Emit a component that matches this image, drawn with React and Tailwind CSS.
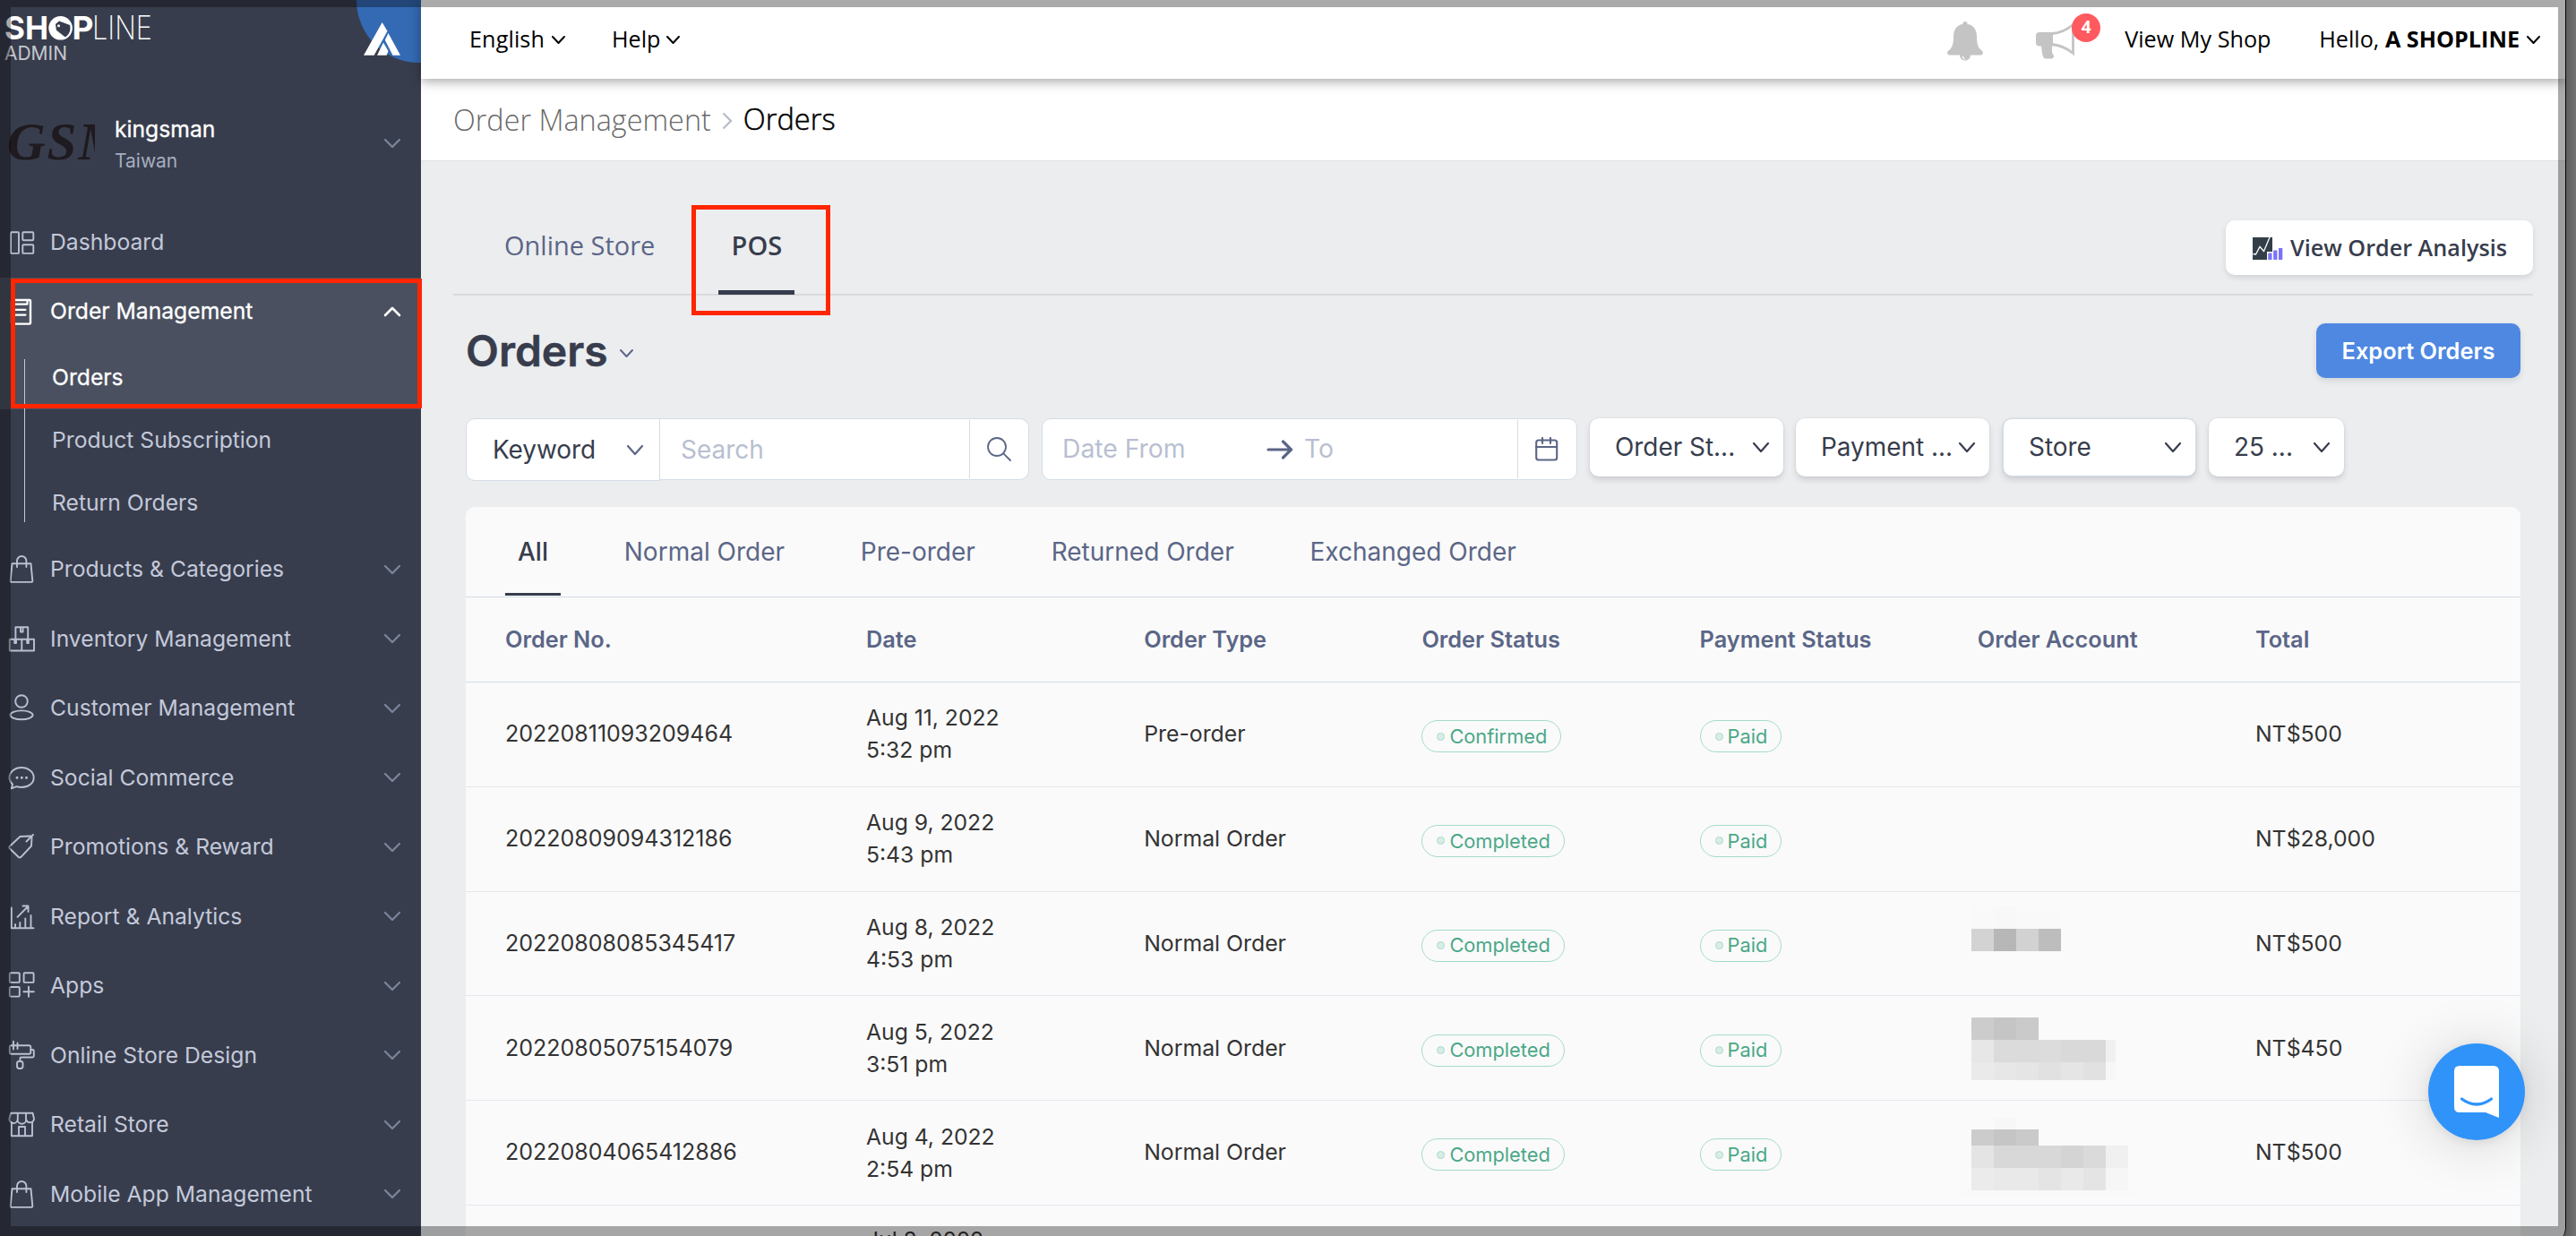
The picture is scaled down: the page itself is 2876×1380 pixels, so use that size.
import React from "react";

const Chevron = ({ w = 18, h = 10, className = "", strokeWidth = 2.2, up = false }) => (
  <svg
    width={w}
    height={h}
    viewBox={`0 0 ${w} ${h}`}
    className={`shrink-0 overflow-visible ${className}`}
    fill="none"
    stroke="currentColor"
    strokeWidth={strokeWidth}
    strokeLinecap="round"
    strokeLinejoin="round"
  >
    <path d={up ? `M1 ${h - 1}L${w / 2} 1L${w - 1} ${h - 1}` : `M1 1L${w / 2} ${h - 1}L${w - 1} 1`} />
  </svg>
);

const bag = (
  <>
    <path d="M5.500 10.300h21l1.800 19.200a1.300 1.300 0 0 1-1.300 1.400H5a1.300 1.300 0 0 1-1.300-1.400z" />
    <path d="M11 14V7.200a5.200 5.200 0 0 1 10.400 0V14" />
  </>
);

const icons = {
  dashboard: (
    <>
      <rect x="4" y="5.3" width="9" height="23.6" rx="1" />
      <rect x="17.3" y="5.3" width="12" height="9" rx="1" />
      <rect x="17.3" y="19.3" width="12" height="9.6" rx="1" />
    </>
  ),
  order: (
    <>
      <rect x="5" y="3" width="21" height="26.6" rx="1" strokeWidth="2.4" />
      <path d="M8.500 7.600H22.500V3.500M9 13.800H20.500M9 19.600H20.500" strokeWidth="2.2" />
    </>
  ),
  bag,
  inventory: (
    <>
      <path d="M9.400 16V3.200H23.200V16M2.800 16.700H30V29.500H2.800zM16.300 16.700V29.500" />
      <path d="M15 4v4.500h2.600V4M8.300 17v4h1.700v-4M22.200 17v4h1.700v-4" />
    </>
  ),
  customer: (
    <>
      <circle cx="16" cy="9" r="6.800" />
      <ellipse cx="16" cy="24.300" rx="12.600" ry="4.900" />
    </>
  ),
  chat: (
    <>
      <path d="M4.800 28.300l1.300-4.600C4 21.700 2.500 19 2.500 16.200 2.500 9.800 8.500 5 16 5s13.700 4.800 13.700 11.200S23.600 27 16 27c-2 0-4-.3-5.700-.8z" />
      <path d="M11 16.300h.01M16.300 16.300h.01M21.500 16.300h.01" strokeWidth="3" />
    </>
  ),
  tag: (
    <>
      <path d="M14.500 5L26 4.500q1.500 0 1.500 1.500L27 15.500 15.500 27.800q-1.500 1.400-3 0L3 18.500q-1.500-1.300 0-2.800z" />
      <path d="M21.500 10.500L29 3" />
    </>
  ),
  report: (
    <>
      <path d="M4.800 6.500V29.300H29.500M9 25v3M14.300 23v5M20.300 18.500v9.500M26.500 15v13" />
      <path d="M11.500 16.800L23.300 5M17.500 4.500h6v6.500" />
    </>
  ),
  apps: (
    <>
      <rect x="2.800" y="2.300" width="11" height="10.600" rx="1" />
      <rect x="18.600" y="2.300" width="11" height="10.600" rx="1" />
      <rect x="2.800" y="18" width="11" height="10.600" rx="1" />
      <path d="M24 17.800v11M18.300 23.200h11.500" />
    </>
  ),
  paint: (
    <>
      <rect x="2.800" y="5.300" width="23.500" height="9.500" rx="2" />
      <path d="M26.300 10h2q1.500 0 1.500 1.500v5.500q0 1.500-1.500 1.500H16q-1.600 0-1.600 1.500V23M7 .8V9.500M11.500 2.500V9" />
      <rect x="11" y="23" width="6.500" height="8" rx="2.400" />
    </>
  ),
  store: (
    <>
      <path d="M4 3.800H28.500L30 10a4.500 4.500 0 0 1-8.800 1 4.800 4.800 0 0 1-9.600 0A4.500 4.500 0 0 1 2.500 10zM11.800 4v7M21 4v7" />
      <path d="M4.800 14V29.300H28V14M13 29V19h7v10" />
    </>
  ),
};

const NavIcon = ({ name, light }) => (
  <svg
    width="32"
    height="32"
    viewBox="0 0 32 32"
    className={`ml-2 -mt-px shrink-0 overflow-visible ${light ? "text-white" : "text-[#b9c0d2]"}`}
    fill="none"
    stroke="currentColor"
    strokeWidth="1.900"
    strokeLinecap="round"
    strokeLinejoin="round"
  >
    {icons[name]}
  </svg>
);

const nav = [
  ["bag", "Products & Categories"],
  ["inventory", "Inventory Management"],
  ["customer", "Customer Management"],
  ["chat", "Social Commerce"],
  ["tag", "Promotions & Reward"],
  ["report", "Report & Analytics"],
  ["apps", "Apps"],
  ["paint", "Online Store Design"],
  ["store", "Retail Store"],
  ["bag", "Mobile App Management"],
];

function Sidebar() {
  return (
    <aside className="relative w-[470px] h-[1390px] shrink-0 overflow-hidden bg-[#383d4d] text-[24.700px] text-[#c3c9da]">
      <div className="relative h-[231px]">
        {/* wordmark */}
        <svg width="172" height="72" className="absolute left-0 top-0" fill="#fff" fontFamily="Inter">
          <text x="5" y="44.300" fontSize="36" fontWeight="700" textLength="49" lengthAdjust="spacingAndGlyphs">SH</text>
          <text x="80.500" y="44.300" fontSize="36" fontWeight="700" textLength="24" lengthAdjust="spacingAndGlyphs">P</text>
          <text x="103" y="44.300" fontSize="36" fontWeight="200" textLength="67" lengthAdjust="spacingAndGlyphs">LINE</text>
          <circle cx="67.600" cy="31.300" r="13.300" />
          <path d="M62 27l4-3.500 12 4.500c1.500 6-1 11-5.500 13.500L63 34.500z" fill="#383d4d" />
          <path d="M63 34l10 8M63 34l7 9M64 37l2 6" stroke="#fff" strokeWidth=".7" />
          <circle cx="65.500" cy="28.800" r="1.500" />
          <text x="5" y="67" fontSize="22" fill="#c6c8ce" textLength="70" lengthAdjust="spacingAndGlyphs">ADMIN</text>
        </svg>
        <svg width="74" height="72" className="absolute right-0 top-0">
          <circle cx="72" cy="0" r="70" fill="#336ab3" />
          <g fill="#fff">
            <path d="M30.700 25l5.800 9.800L21.700 61.700H10z" />
            <path d="M37.500 37L51 61.700h-8.500l-8.700-17z" />
            <path d="M32 47.500l5.500 9.500-1.800 4.700H25z" />
          </g>
        </svg>
        <div className="absolute left-[6px] top-[128px] h-[60px] w-[100px] overflow-hidden">
          <span className="ml-[2px] block font-['Liberation_Serif'] text-[59px] italic font-bold leading-[60px] tracking-[2px] text-[#1e1a1f]">GSM</span>
        </div>
        <div className="flex pt-[126px] pl-[128px] pr-[23px]">
          <div className="flex-1">
            <div className="text-[24.700px] leading-[36px] text-white [-webkit-text-stroke:0.3px_white]">kingsman</div>
            <div className="mt-[1px] text-[21px] leading-[34px] text-[#a5adbf]">Taiwan</div>
          </div>
          <Chevron className="mt-[29px] text-[#7c869b]" />
        </div>
      </div>

      <div className="flex h-[79px] items-center">
        <NavIcon name="dashboard" />
        <span className="ml-[16px]">Dashboard</span>
      </div>

      <div className="h-[147px] bg-[#4a505f] text-white [-webkit-text-stroke:0.3px_white]">
        <div className="flex h-[76px] items-center pr-[23px]">
          <NavIcon name="order" light />
          <span className="ml-[16px] flex-1">Order Management</span>
          <Chevron up strokeWidth={2.6} />
        </div>
        <div className="flex h-[71px] items-center pl-[58px]">Orders</div>
      </div>
      <div className="flex h-[70px] items-center pl-[58px]">Product Subscription</div>
      <div className="flex h-[70px] items-center pl-[58px]">Return Orders</div>
      <div className="absolute left-[27px] top-[401px] h-[182px] w-px bg-[#c3c9da]" />

      {nav.map(([icon, label]) => (
        <div key={label} className="flex h-[77.500px] items-center pr-[23px]">
          <NavIcon name={icon} />
          <span className="ml-[16px] flex-1">{label}</span>
          <Chevron className="text-[#7c869b]" />
        </div>
      ))}
    </aside>
  );
}

function TopBar() {
  return (
    <header className="relative z-10 flex h-[88px] shrink-0 items-center bg-white pb-[1px] pl-[54px] font-['Open_Sans'] text-[25.200px] text-black shadow-[0_3px_12px_rgba(0,0,0,0.35)]">
      <div className="flex w-[159px] items-center gap-[8px] pt-0.5"><span className="-mt-[2px] tracking-[0.1px]">English</span><Chevron w={15} h={9} strokeWidth={2} /></div>
      <div className="flex items-center gap-[7px] pt-0.5"><span className="-mt-[2px]">Help</span><Chevron w={15} h={9} strokeWidth={2} /></div>
      <div className="flex-1" />
      <svg width="40" height="44" viewBox="0 0 40 44" className="mt-[4px]" fill="#c4c4c4">
        <path d="M20 0c1.700 0 2.600 1.200 2.600 3C30 4 33 10 33 17c0 9 2 13 6 16 2 2 .5 4.500-1.500 4.500H26c0 3.500-2.500 6-6 6s-6-2.500-6-6H2.500C.5 37.500-1 35 1 33c4-3 6-7 6-16C7 10 10 4 17.400 3c0-1.800.9-3 2.600-3z" />
        <path d="M17 38.500q.5 3 3 3.500" stroke="#fff" strokeWidth="1.200" fill="none" />
      </svg>
      <div className="relative ml-[59px] w-[99px]">
        <svg width="46" height="40" viewBox="0 0 46 40" className="mt-[4px] block">
          <path d="M0 14q0-4 4-4h15v15.500H18v7q1 2 2 4 0 3-3 3h-6q-3 0-4-6l-1-8H4q-4 0-4-4z" fill="#c4c4c4" />
          <path d="M18 11.500C27 11 35 7 41.500 1.500v32C35 28 27 24.500 18 23.500" fill="none" stroke="#c4c4c4" strokeWidth="2.800" />
        </svg>
        <span className="absolute left-[40px] -top-[7px] flex size-8 items-center justify-center rounded-full bg-[#ff5a5f] text-[19px] font-bold text-white">4</span>
      </div>
      <span className="w-[217px]">View My Shop</span>
      <span className="whitespace-pre">Hello, <b>A SHOPLINE</b></span>
      <Chevron w={15} h={9} strokeWidth={2} className="ml-[8px] mr-[28px] mt-[2px]" />
    </header>
  );
}

const Dropdown = ({ label, className }) => (
  <div className={`flex h-[65px] items-center justify-between rounded-[10px] bg-white pl-[28px] pr-4 text-[27.900px] text-[#373d4d] shadow-[0_4px_6px_rgba(60,60,80,0.16),0_0_2px_rgba(60,60,80,0.12)] ${className}`}>
    <span className="whitespace-nowrap">{label}</span>
    <Chevron h={11} />
  </div>
);

function Filters() {
  return (
    <div className="mt-[45px] ml-[50px] flex h-[70px] items-start text-[28px]">
      <div className="flex h-[70px] w-[217px] items-center justify-between rounded-l-[10px] border border-[#d3dde6] bg-white pl-[29px] pr-[18px] text-[#373d4d]">
        <span className="tracking-[-0.1px]">Keyword</span>
        <Chevron h={11} className="text-[#5b6687]" />
      </div>
      <div className="flex h-[69px] w-[412px] rounded-r-[10px] border border-l-0 border-[#d3dde6] bg-white py-px">
        <span className="flex flex-1 items-center pl-[23px] text-[#b8bfd1]">Search</span>
        <div className="flex w-[66px] items-center justify-center border-l border-[#d3dde6]">
          <svg width="27" height="27" viewBox="0 0 27 27" fill="none" stroke="#5b6687" strokeWidth="1.800" strokeLinecap="round">
            <circle cx="11" cy="11" r="10" />
            <path d="M18.300 18.300L26 26" />
          </svg>
        </div>
      </div>
      <div className="ml-[14px] flex h-[69px] w-[598px] rounded-[10px] border border-[#d3dde6] bg-white py-px text-[28.300px]">
        <div className="flex flex-1 items-center pl-[22px] text-[#b8bfd1]">
          <span className="w-[228px]">Date From</span>
          <svg width="30" height="22" viewBox="0 0 30 22" fill="none" stroke="#5b6687" strokeWidth="3.200" strokeLinecap="round" strokeLinejoin="round">
            <path d="M2 11h25M18.500 2l9 9-9 9" />
          </svg>
          <span className="ml-[12px]">To</span>
        </div>
        <div className="flex w-[66px] items-center pl-[19px] border-l border-[#d3dde6]">
          <svg width="26" height="27" viewBox="0 0 26 27" fill="none" stroke="#5b6687" strokeWidth="2.100" strokeLinecap="round">
            <rect x="1.200" y="3.500" width="23" height="22" rx="2.500" />
            <path d="M1.200 11h23M8 1v6M17 1v6" />
          </svg>
        </div>
      </div>
      <Dropdown label="Order St..." className="ml-[14px] w-[216px]" />
      <Dropdown label="Payment ..." className="ml-[14px] w-[216px]" />
      <Dropdown label="Store" className="ml-[15px] w-[216px] border border-[#d3dde6]" />
      <Dropdown label="25 ..." className="ml-[14px] w-[151px]" />
    </div>
  );
}

const Mosaic = ({ rows, top }) => (
  <div className="absolute -left-[7px]" style={{ top }}>
    {rows.map((r, i) => (
      <div key={i} className="flex" style={{ height: r.h, marginLeft: r.x || 0 }}>
        {r.c.map((c, j) => (
          <div key={j} style={{ width: (r.w && j === r.c.length - 1) ? r.w : 25, background: c ? `#${c}${c}${c}` : "transparent" }} />
        ))}
      </div>
    ))}
  </div>
);

const mosaics = {
  a: { top: 16, rows: [
    { h: 25, c: ["f9", "f8", "f9", "f9"] },
    { h: 25, c: ["d3", "b7", "d2", "bd"] },
  ] },
  b: { top: 24, rows: [
    { h: 25, c: ["cc", "c5", "ca"] },
    { h: 25, w: 11, c: ["e7", "db", "db", "dc", "d9", "d9", "f0"] },
    { h: 20, w: 11, c: ["ea", "e7", "e5", "e1", "e5", "e1", "f7"] },
  ] },
  c: { top: 19, rows: [
    { h: 13, c: ["", "f7"] },
    { h: 18, c: ["cc", "c5", "ca"] },
    { h: 25, c: ["e4", "d8", "d8", "d8", "d4", "da", "f0"] },
    { h: 25, c: ["eb", "e9", "e9", "e4", "e9", "e4", "f6"] },
    { h: 8, w: 183, x: -21, c: ["f9", "f9"] },
  ] },
};

const orders = [
  ["20220811093209464", "Aug 11, 2022", "5:32 pm", "Pre-order", "Confirmed", null, "NT$500"],
  ["20220809094312186", "Aug 9, 2022", "5:43 pm", "Normal Order", "Completed", null, "NT$28,000"],
  ["20220808085345417", "Aug 8, 2022", "4:53 pm", "Normal Order", "Completed", "a", "NT$500"],
  ["20220805075154079", "Aug 5, 2022", "3:51 pm", "Normal Order", "Completed", "b", "NT$450"],
  ["20220804065412886", "Aug 4, 2022", "2:54 pm", "Normal Order", "Completed", "c", "NT$500"],
];

const Badge = ({ children }) => (
  <span className="mt-[3px] inline-flex h-[36px] items-center rounded-full border-[1.500px] border-[#a5dcc8] pl-[16px] pr-[15px] text-[21.800px] text-[#4ba888]">
    <i className="mr-[5px] size-[9px] rounded-full border border-[#aad9c8] bg-[#d8ede5]" />
    {children}
  </span>
);

const cols = "grid grid-cols-[403px_repeat(5,310.200px)_1fr] pl-[44px]";

function OrdersTable() {
  const tabs = ["All", "Normal Order", "Pre-order", "Returned Order", "Exchanged Order"];
  return (
    <div className="mt-[29px] ml-[50px] w-[2294px] flex-1 rounded-t-[10px] bg-[#fafafa]">
      <div className="flex h-[101px] gap-[56.800px] border-b border-[#d3dde6] pl-[44px] text-[28px] text-[#5b6687]">
        {tabs.map((t, i) => (
          <div key={t} className={`flex h-[99px] items-center px-[14px] ${i === 0 ? "border-b-[3px] border-[#373d4d] pt-[3px] font-medium text-[#373d4d]" : ""}`}>
            <span className="pt-px">{t}</span>
          </div>
        ))}
      </div>
      <div className={`${cols} h-[95px] items-center border-b border-[#d3dde6] pb-px text-[25.300px] font-semibold text-[#5b6687]`}>
        {["Order No.", "Date", "Order Type", "Order Status", "Payment Status", "Order Account", "Total"].map((h) => (
          <span key={h}>{h}</span>
        ))}
      </div>
      {orders.map(([no, d, t, type, status, m, total]) => (
        <div key={no} className={`${cols} h-[116.800px] items-center border-b-[1.500px] border-[#e4e8ef] text-[25px] text-[#333]`}>
          <span>{no}</span>
          <span className="-mt-px text-[24.700px] leading-[36px]">{d}<br />{t}</span>
          <span className="text-[24.800px]">{type}</span>
          <span><Badge>{status}</Badge></span>
          <span><Badge>Paid</Badge></span>
          <span className="relative h-full">{m && <Mosaic {...mosaics[m]} />}</span>
          <span className="text-[24.800px]">{total}</span>
        </div>
      ))}
      <div className={`${cols} h-[113px] items-center text-[24.700px] leading-[36px] text-[#333]`}>
        <span />
        <span>Jul 8, 2022<br />5:20 pm</span>
      </div>
    </div>
  );
}

export default function App() {
  return (
    <div className="relative h-[1380px] w-[2876px] overflow-hidden bg-linear-to-r from-[#5e5e5e] from-[99.600%] to-[#747474] font-['Inter',sans-serif]">
      <div className="relative flex h-[1390px] w-[2865px] overflow-hidden rounded-br-[20px] border-r border-black bg-[#ecedef]">
        <Sidebar />
        <div className="flex min-w-0 flex-1 flex-col">
          <TopBar />
          <div className="flex h-[92px] shrink-0 items-center border-b border-[#e0e1e3] bg-white pl-[36px] font-['Open_Sans'] text-[32.400px]">
            <span className="font-light text-[#6a6a6a]">Order Management</span>
            <svg width="12" height="20" viewBox="0 0 12 20" className="mx-[12px] mt-[2px]" fill="none" stroke="#b4bac9" strokeWidth="2.200">
              <path d="M1.500 1.500L10 10l-8.500 8.500" />
            </svg>
            <span className="text-[32.600px] font-light text-black [-webkit-text-stroke:0.5px_black]">Orders</span>
          </div>

          <div className="ml-[36px] flex h-[150px] w-[2322px] shrink-0 border-b-2 border-[#d9dadc] font-['Open_Sans']">
            <div className="relative flex pl-[57px] pt-[66px] text-[29px] leading-[56px]">
              <span className="text-[#5b6687]">Online Store</span>
              <span className="ml-[71px] h-[83px] w-[85px] border-b-[5px] border-[#373d4d] text-center font-semibold text-[#373d4d]">POS</span>
            </div>
            <button className="ml-auto mt-[66px] flex h-[61px] w-[343px] items-center rounded-[10px] bg-white pl-[30px] pt-px text-[25.200px] font-semibold text-[#373d4d] shadow-[0_3px_6px_rgba(60,60,80,0.14)]">
              <svg width="34" height="25" viewBox="0 0 34 25" className="mr-[8px]">
                <path d="M0 0H22V16H16V25H0z" fill="#333f48" />
                <path d="M.5 18.500l3 .5L8 10.500l4.500 5L19 0" stroke="#fff" strokeWidth="1.300" fill="none" />
                <path d="M17.300 17.500h4.200V25h-4.200zM23.200 14.500h4.200V25h-4.200zM29 12h4.300v13H29z" fill="#7b72f8" />
              </svg>
              View Order Analysis
            </button>
          </div>

          <div className="ml-[50px] mt-[31px] flex h-[61px] w-[2294px] shrink-0 items-center">
            <h1 className="text-[48px] font-semibold leading-none text-[#373d4d] [-webkit-text-stroke:0.5px_#373d4d]">Orders</h1>
            <Chevron w={15} h={9} strokeWidth={2} className="ml-[13px] mt-[6px] text-[#5b6687]" />
            <button className="ml-auto h-[61px] w-[228px] rounded-[10px] bg-[#4e88e1] pt-[2px] text-[25.400px] font-semibold text-white shadow-[0_3px_6px_rgba(60,60,80,0.14)]">Export Orders</button>
          </div>

          <Filters />
          <OrdersTable />
        </div>
      </div>

      {/* dimmed frame along the window's edges */}
      <div className="pointer-events-none absolute left-0 top-0 z-20 h-[1390px] w-[2864px] rounded-br-[20px] border-b-[21px] border-l-[12px] border-r-8 border-t-8 border-black/[0.335]" />

      {/* highlights */}
      <div className="absolute left-[12px] top-[311px] z-30 h-[145px] w-[459px] border-[5px] border-[#ff2600]" />
      <div className="absolute left-[772px] top-[229px] z-30 h-[123px] w-[155px] border-[5px] border-[#ff2600]" />

      {/* messenger launcher */}
      <div className="absolute left-[2711px] top-[1165px] z-10 flex size-[108px] items-center justify-center rounded-full bg-[#3093fa] shadow-[0_2px_12px_rgba(0,0,0,0.08),0_4px_64px_rgba(0,0,0,0.16)]">
        <svg width="50" height="58" viewBox="0 0 50 58">
          <path d="M6 0H44q6 0 6 6V58L35 52H6q-6 0-6-6V6Q0 0 6 0z" fill="#fff" />
          <path d="M8.500 37q16.500 12 33 0" fill="none" stroke="#3093fa" strokeWidth="3.200" strokeLinecap="round" />
        </svg>
      </div>
    </div>
  );
}
